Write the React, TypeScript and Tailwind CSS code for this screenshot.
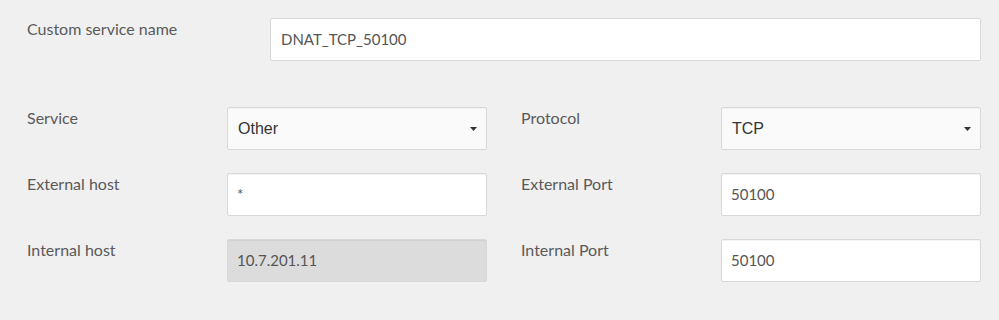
import React from "react";

const labelCls = "pt-[1px] text-[16px] leading-[20px] text-[#5a5a5a]";
const fieldBase =
  "h-[43px] w-full rounded-[2px] border border-[#d8d8d8] px-[9px] text-[15px] outline-none";

type Row = {
  label: string;
  kind: "select" | "input" | "readonly";
  value: string;
};

const left: Row[] = [
  { label: "Service", kind: "select", value: "Other" },
  { label: "External host", kind: "input", value: "*" },
  { label: "Internal host", kind: "readonly", value: "10.7.201.11" },
];

const right: Row[] = [
  { label: "Protocol", kind: "select", value: "TCP" },
  { label: "External Port", kind: "input", value: "50100" },
  { label: "Internal Port", kind: "input", value: "50100" },
];

function Field({ row }: { row: Row }) {
  if (row.kind === "select") {
    return (
      <div
        className={`${fieldBase} flex items-center justify-between bg-[#fafafa] text-[16px] text-[#333] shadow-[inset_0_1px_1px_rgba(0,0,0,0.04)]`}
        style={{ fontFamily: '"Liberation Sans", Arial, sans-serif' }}
      >
        <span className="pl-[1px]">{row.value}</span>
        <svg width="7" height="4" viewBox="0 0 7 4" className="mr-[0px]">
          <path d="M0 0 L7 0 L3.5 4 Z" fill="#333" />
        </svg>
      </div>
    );
  }
  const readonly = row.kind === "readonly";
  return (
    <div
      className={`${fieldBase} flex items-center ${
        readonly ? "bg-[#dcdcdc] text-[#555]" : "bg-white text-[#555]"
      } shadow-[inset_0_1px_1px_rgba(0,0,0,0.05)]`}
    >
      <span>{row.value}</span>
    </div>
  );
}

function Column({ rows }: { rows: Row[] }) {
  return (
    <div className="flex flex-col gap-[23px]">
      {rows.map((r) => (
        <div key={r.label} className="grid grid-cols-[200px_1fr] items-start">
          <div className={labelCls}>{r.label}</div>
          <Field row={r} />
        </div>
      ))}
    </div>
  );
}

export default function App() {
  return (
    <div
      className="h-[320px] w-[999px] bg-[#f0f0f0] pl-[27px] pr-[18px] pt-[18px]"
      style={{ fontFamily: 'Lato, "Open Sans", sans-serif' }}
    >
      <div className="grid grid-cols-[243px_1fr] items-start">
        <div className={labelCls}>Custom service name</div>
        <div className={`${fieldBase} flex h-[42px] items-center bg-white px-[10px] text-[#555]`}>
          DNAT_TCP_50100
        </div>
      </div>

      <div className="mt-[46px] grid grid-cols-[460px_460px] gap-x-[34px]">
        <Column rows={left} />
        <Column rows={right} />
      </div>
    </div>
  );
}
